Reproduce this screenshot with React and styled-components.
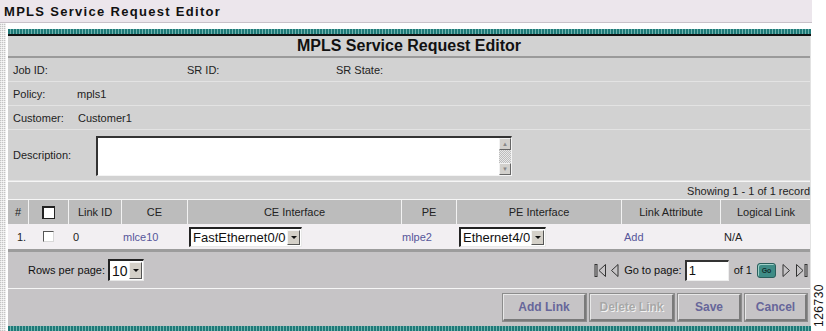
import React from 'react'
import styled, { createGlobalStyle } from 'styled-components'

const GlobalStyle = createGlobalStyle`
  html, body {
    margin: 0;
    padding: 0;
    background: #ffffff;
    font-family: 'Liberation Sans', Arial, sans-serif;
  }
`

const Page = styled.div`
  display: flex;
  width: 826px;
  height: 331px;
  overflow: hidden;
`

const Main = styled.div`
  width: 812px;
  display: flex;
  flex-direction: column;
`

const TopBar = styled.div`
  height: 22px;
  display: flex;
  align-items: center;
  padding-left: 4px;
  background: #ece6ec;
  border-bottom: 1px solid #c9c2c9;
  font-size: 13px;
  font-weight: bold;
  letter-spacing: 1.3px;
  color: #111;
`

const Body = styled.div`
  flex: 1;
  display: flex;
`

const Strip = styled.div`
  width: 6px;
  margin-right: 2px;
  background:
    repeating-linear-gradient(0deg, transparent 0 1px, rgba(255,255,255,0.7) 1px 2px),
    repeating-linear-gradient(90deg, #c4c4c4 0 1px, #e6e6e6 1px 2px);
`

const Content = styled.div`
  width: 803px;
  padding-top: 6px;
  display: flex;
  flex-direction: column;
`

const TealBar = styled.div`
  height: ${p => p.$h || 5}px;
  background:
    repeating-linear-gradient(90deg, #1f7a78 0 2px, #6fb3ae 2px 3px);
  border-bottom: ${p => (p.$line ? '2px solid #111' : 'none')};
`

const Panel = styled.div`
  flex: 1;
  display: flex;
  flex-direction: column;
  background: #d2d2d2;
  border-right: 1px solid #e2e2e2;
`

const TitleRow = styled.div`
  height: 20px;
  display: flex;
  align-items: center;
  justify-content: center;
  border-bottom: 2px solid #9a9a9a;
  font-size: 16px;
  font-weight: bold;
  color: #111;
`

const InfoRow = styled.div`
  height: ${p => p.$h || 23}px;
  display: flex;
  align-items: center;
  border-bottom: 1px solid #e3e3e3;
  font-size: 11px;
  color: #222;
`

const Label = styled.span`
  box-sizing: border-box;
  width: ${p => p.$w}px;
  padding-left: 5px;
  flex-shrink: 0;
`

const TextArea = styled.div`
  width: 416px;
  height: 40px;
  display: flex;
  background: #fff;
  border-top: 2px solid #333;
  border-left: 2px solid #333;
  border-right: 1px solid #f4f4f4;
  border-bottom: 1px solid #f4f4f4;
  box-sizing: border-box;
  margin-top: 1px;
`

const TextBody = styled.div`
  flex: 1;
`

const ScrollBar = styled.div`
  width: 12px;
  display: flex;
  flex-direction: column;
  background:
    repeating-conic-gradient(#e8e8e8 0 25%, #bdbdbd 0 50%) 0 0 / 2px 2px;
`

const ScrollBtn = styled.div`
  height: 12px;
  display: flex;
  align-items: center;
  justify-content: center;
  background: #d2d0cc;
  border-top: 1px solid #f2f2f2;
  border-left: 1px solid #f2f2f2;
  border-right: 1px solid #666;
  border-bottom: 1px solid #666;
  box-sizing: border-box;
  font-size: 6px;
  color: #888;
  margin-top: ${p => (p.$down ? 'auto' : '0')};
`

const CountRow = styled.div`
  height: 17px;
  display: flex;
  align-items: center;
  justify-content: flex-end;
  border-top: 1px solid #f6f6f6;
  border-bottom: 1px solid #f6f6f6;
  font-size: 11px;
  color: #222;
  white-space: nowrap;
`

const cols = '20px 40px 53px 66px 214px 55px 165px 99px 91px'

const HeadRow = styled.div`
  display: grid;
  grid-template-columns: ${cols};
  height: 24px;
  background: #bcbcbc;
`

const HeadCell = styled.div`
  display: flex;
  align-items: center;
  justify-content: center;
  border-left: ${p => (p.$first ? 'none' : '1px solid #f2f2f2')};
  font-size: 11px;
  color: #222;
`

const DataRow = styled.div`
  display: grid;
  grid-template-columns: ${cols};
  height: 25px;
  background: #f2eff2;
  border-bottom: 3px solid #9c9c9c;
`

const Cell = styled.div`
  display: flex;
  align-items: center;
  justify-content: ${p => p.$center ? 'center' : 'flex-start'};
  padding-left: ${p => p.$pl || 0}px;
  font-size: 11px;
  color: ${p => (p.$link ? '#56569a' : '#222222')};
`

const Check = styled.span`
  display: inline-block;
  width: ${p => p.$s || 11}px;
  height: ${p => p.$s || 11}px;
  background: #fff;
  border-top: 1px solid #555;
  border-left: 1px solid #555;
  border-right: 1px solid #d8d8d8;
  border-bottom: 1px solid #d8d8d8;
  box-sizing: border-box;
  ${p => p.$bold && 'border: 1px solid #222; border-top-width: 2px; border-left-width: 2px;'}
`

const SelectBox = styled.div`
  display: flex;
  width: ${p => p.$w}px;
  height: ${p => p.$h || 20}px;
  background: #fff;
  border-top: 2px solid #222;
  border-left: 2px solid #222;
  border-right: 1px solid #e8e8e8;
  border-bottom: 1px solid #e8e8e8;
  box-sizing: border-box;
`

const SelectText = styled.span`
  flex: 1;
  display: flex;
  align-items: center;
  padding-left: 2px;
  font-size: ${p => p.$fs || 13}px;
  color: #111;
  white-space: nowrap;
  overflow: hidden;
`

const SelectArrow = styled.span`
  width: 11px;
  margin: 1px;
  display: flex;
  align-items: center;
  justify-content: center;
  background: #d4d0c8;
  border-top: 1px solid #f4f4f4;
  border-left: 1px solid #f4f4f4;
  border-right: 1px solid #555;
  border-bottom: 1px solid #555;
  &::after {
    content: '';
    border-left: 3px solid transparent;
    border-right: 3px solid transparent;
    border-top: 3px solid #111;
  }
`

const PagerRow = styled.div`
  height: 36px;
  display: flex;
  align-items: center;
  background: #c6c4c6;
  border-bottom: 1px solid #f6f6f6;
  font-size: 11px;
  color: #111;
`

const RowsPer = styled.div`
  display: flex;
  align-items: center;
  gap: 3px;
  padding-left: 20px;
`

const Nav = styled.div`
  margin-left: auto;
  display: flex;
  align-items: center;
  padding-right: 0;
`

const NavIcon = styled.svg`
  display: block;
  margin-right: ${p => p.$mr || 2}px;
`

const PageInput = styled.div`
  width: 44px;
  height: 21px;
  margin-left: 3px;
  display: flex;
  align-items: center;
  padding-left: 2px;
  box-sizing: border-box;
  background: #fff;
  border-top: 2px solid #333;
  border-left: 2px solid #333;
  border-right: 1px solid #eee;
  border-bottom: 1px solid #eee;
  font-size: 13px;
`

const OfText = styled.span`
  margin-left: 5px;
`

const GoButton = styled.span`
  width: 17px;
  height: 13px;
  margin: 0 6px 0 5px;
  display: flex;
  align-items: center;
  justify-content: center;
  background: #3f8c86;
  border-radius: 3px;
  border: 1px solid #2a5f5c;
  box-shadow: inset 1px 1px 0 #9fd0c8;
  font-size: 7px;
  font-weight: bold;
  color: #12302e;
`

const ButtonRow = styled.div`
  flex: 1;
  display: flex;
  align-items: center;
  justify-content: flex-end;
  gap: 4px;
  padding-right: 3px;
  background: #c6c4c6;
`

const Button = styled.div`
  width: ${p => p.$w}px;
  height: 27px;
  display: flex;
  align-items: center;
  justify-content: center;
  box-sizing: border-box;
  border-top: 1px solid #e8e8e8;
  border-left: 1px solid #e8e8e8;
  border-right: 2px solid #7a7a7a;
  border-bottom: 2px solid #7a7a7a;
  outline: 1px solid #8c8c8c;
  font-size: 12px;
  font-weight: bold;
  color: ${p => (p.$disabled ? '#a8a8a8' : '#66669a')};
  text-shadow: ${p => (p.$disabled ? '1px 1px 0 #f4f4f4' : 'none')};
`

const Side = styled.div`
  width: 14px;
  display: flex;
  flex-direction: column;
  justify-content: flex-end;
  align-items: center;
  padding-bottom: 4px;
`

const FigNo = styled.span`
  writing-mode: vertical-rl;
  transform: rotate(180deg);
  font-size: 12px;
  color: #111;
  letter-spacing: 0.5px;
`

function Select ({ value, w, h, fs }) {
  return (
    <SelectBox $w={w} $h={h}>
      <SelectText $fs={fs}>{value}</SelectText>
      <SelectArrow />
    </SelectBox>
  )
}

function FirstIcon () {
  return (
    <NavIcon width='13' height='15' viewBox='0 0 13 15' $mr={3}>
      <rect x='1' y='1.5' width='2' height='12' fill='none' stroke='#333' strokeWidth='1' />
      <path d='M11.5 1.5 L5 7.5 L11.5 13.5 Z' fill='none' stroke='#333' strokeWidth='1' />
    </NavIcon>
  )
}

function PrevIcon () {
  return (
    <NavIcon width='9' height='15' viewBox='0 0 9 15' $mr={5}>
      <path d='M8 1.5 L1.5 7.5 L8 13.5 Z' fill='none' stroke='#333' strokeWidth='1' />
    </NavIcon>
  )
}

function NextIcon () {
  return (
    <NavIcon width='9' height='15' viewBox='0 0 9 15' $mr={4}>
      <path d='M1 1.5 L7.5 7.5 L1 13.5 Z' fill='none' stroke='#333' strokeWidth='1' />
    </NavIcon>
  )
}

function LastIcon () {
  return (
    <NavIcon width='13' height='15' viewBox='0 0 13 15' $mr={0}>
      <path d='M1.5 1.5 L8 7.5 L1.5 13.5 Z' fill='none' stroke='#333' strokeWidth='1' />
      <rect x='10' y='1.5' width='2' height='12' fill='none' stroke='#333' strokeWidth='1' />
    </NavIcon>
  )
}

const headers = ['#', null, 'Link ID', 'CE', 'CE Interface', 'PE', 'PE Interface', 'Link Attribute', 'Logical Link']

export default function App () {
  return (
    <Page>
      <GlobalStyle />
      <Main>
        <TopBar>MPLS Service Request Editor</TopBar>
        <Body>
          <Strip />
          <Content>
            <TealBar $h={5} $line />
            <Panel>
              <TitleRow>MPLS Service Request Editor</TitleRow>
              <InfoRow>
                <Label $w={174}>Job ID:</Label>
                <Label $w={149}>SR ID:</Label>
                <Label $w={100}>SR State:</Label>
              </InfoRow>
              <InfoRow>
                <Label $w={69}>Policy:</Label>
                <span>mpls1</span>
              </InfoRow>
              <InfoRow>
                <Label $w={70}>Customer:</Label>
                <span>Customer1</span>
              </InfoRow>
              <InfoRow $h={50}>
                <Label $w={88}>Description:</Label>
                <TextArea>
                  <TextBody />
                  <ScrollBar>
                    <ScrollBtn>▲</ScrollBtn>
                    <ScrollBtn $down>▼</ScrollBtn>
                  </ScrollBar>
                </TextArea>
              </InfoRow>
              <CountRow>Showing 1 - 1 of 1 record</CountRow>
              <HeadRow>
                {headers.map((h, i) => (
                  <HeadCell key={i} $first={i === 0}>
                    {h === null ? <Check $s={13} $bold /> : h}
                  </HeadCell>
                ))}
              </HeadRow>
              <DataRow>
                <Cell $pl={9}>1.</Cell>
                <Cell $center><Check /></Cell>
                <Cell $pl={5}>0</Cell>
                <Cell $pl={2} $link>mlce10</Cell>
                <Cell $pl={2}><Select value='FastEthernet0/0' w={113} /></Cell>
                <Cell $pl={1} $link>mlpe2</Cell>
                <Cell $pl={3}><Select value='Ethernet4/0' w={87} /></Cell>
                <Cell $pl={3} $link>Add</Cell>
                <Cell $pl={4}>N/A</Cell>
              </DataRow>
              <PagerRow>
                <RowsPer>
                  Rows per page:
                  <Select value='10' w={36} h={22} fs={14} />
                </RowsPer>
                <Nav>
                  <FirstIcon />
                  <PrevIcon />
                  Go to page:
                  <PageInput>1</PageInput>
                  <OfText>of 1</OfText>
                  <GoButton>Go</GoButton>
                  <NextIcon />
                  <LastIcon />
                </Nav>
              </PagerRow>
              <ButtonRow>
                <Button $w={83}>Add Link</Button>
                <Button $w={84} $disabled>Delete Link</Button>
                <Button $w={63}>Save</Button>
                <Button $w={62}>Cancel</Button>
              </ButtonRow>
            </Panel>
            <TealBar $h={5} />
          </Content>
        </Body>
      </Main>
      <Side>
        <FigNo>126730</FigNo>
      </Side>
    </Page>
  )
}
